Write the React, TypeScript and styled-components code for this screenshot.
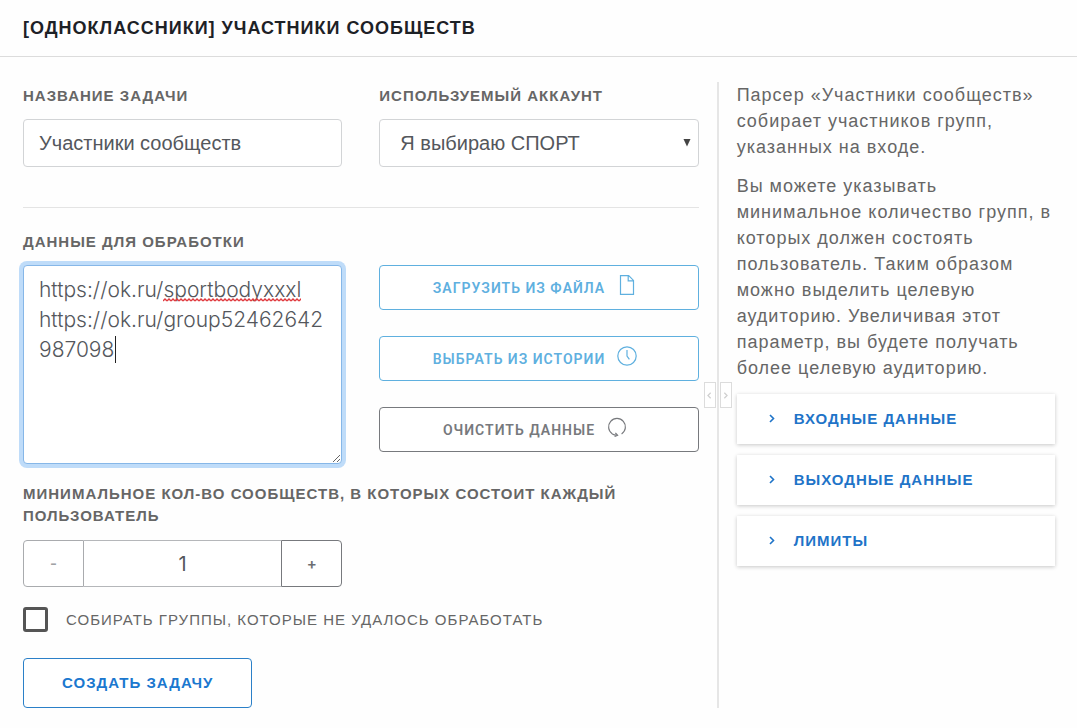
import React, { useState } from "react";
import styled, { createGlobalStyle, css } from "styled-components";

const GlobalStyle = createGlobalStyle`
  *, *::before, *::after { box-sizing: border-box; }
  body {
    margin: 0;
    background: #fefefe;
    color: #666;
    font-family: "Liberation Sans", Arial, sans-serif;
  }
`;

const Header = styled.header`
  padding: 16px 23px;
  border-bottom: 1px solid #dcdcdc;
`;

const Title = styled.h1`
  margin: 0;
  color: #1d2126;
  font-size: 18px;
  line-height: 24px;
  letter-spacing: 1px;
  text-transform: uppercase;
`;

const Layout = styled.div`
  display: grid;
  grid-template-columns: minmax(0, 2fr) 2px minmax(0, 1fr);
  padding: 25px 0 20px;
`;

const Form = styled.form`
  padding: 3px 18px 0 23px;
`;

const Columns = styled.div`
  display: grid;
  grid-template-columns: repeat(2, minmax(0, 1fr));
  column-gap: 37px;
`;

const Label = styled.label`
  display: block;
  margin-bottom: 12px;
  font-size: 15px;
  font-weight: 700;
  line-height: 22px;
  letter-spacing: 1px;
  text-transform: uppercase;
`;

const field = css`
  width: 100%;
  border: 1px solid #d2d4d6;
  border-radius: 4px;
  background: #fff;
  color: #54575c;
  font: 20px "Liberation Sans", Arial, sans-serif;
`;

const TextInput = styled.input`
  ${field}
  display: block;
  height: 48px;
  padding: 0 15px;
`;

const SelectBox = styled.div`
  display: grid;
  align-items: center;

  > * { grid-area: 1 / 1; }
`;

const Select = styled.select`
  ${field}
  height: 48px;
  padding: 0 20px;
  appearance: none;
`;

const SelectArrow = styled.svg`
  justify-self: end;
  margin-right: 8px;
  pointer-events: none;
`;

const Divider = styled.hr`
  height: 1px;
  margin: 40px 0 23px;
  border: 0;
  background: #e4e4e4;
`;

const Editor = styled.div`
  position: relative;
`;

const TextArea = styled.textarea`
  ${field}
  display: block;
  height: 199px;
  padding: 9px 15px;
  border-color: #86b7e8;
  outline: 0;
  box-shadow: 0 0 0 4px #bfdcf9;
  font-family: Inter, sans-serif;
  font-size: 21px;
  font-weight: 300;
  line-height: 30px;
  word-break: break-all;
  resize: vertical;
`;

const SpellMark = styled.svg`
  position: absolute;
  top: 33px;
  left: 140px;
  pointer-events: none;
`;

const Caret = styled.span`
  position: absolute;
  top: 71px;
  left: 92px;
  width: 1px;
  height: 27px;
  background: #222;
  pointer-events: none;
`;

const Actions = styled.div`
  display: flex;
  flex-direction: column;
  gap: 26px;
  padding-top: 34px;
`;

const tones = { info: "#5fb0df", muted: "#77797d" };

const ActionButton = styled.button<{ $tone: keyof typeof tones }>`
  display: flex;
  align-items: center;
  justify-content: center;
  gap: 12px;
  height: 45px;
  padding: 0 12px 0 4px;
  border: 1px solid ${({ $tone }) => tones[$tone]};
  border-radius: 4px;
  background: #fff;
  color: ${({ $tone }) => tones[$tone]};
  font: 600 14px Roboto, sans-serif;
  letter-spacing: 1px;
  text-transform: uppercase;

  svg { margin-bottom: 6px; }
`;

const StepperLabel = styled(Label)`
  margin: 19px 0 13px;
`;

const Stepper = styled.div`
  display: flex;
  height: 47px;
`;

const StepButton = styled.button<{ $side: "left" | "right" }>`
  width: 61px;
  border: 1px solid ${({ $side }) => ($side === "left" ? "#a9abae" : "#77797d")};
  border-radius: ${({ $side }) => ($side === "left" ? "4px 0 0 4px" : "0 4px 4px 0")};
  background: #fff;
  color: ${({ $side }) => ($side === "left" ? "#a0a2a5" : "#6c6e72")};
  font: 600 15px Inter, sans-serif;
`;

const StepValue = styled.input`
  flex: 1;
  min-width: 0;
  border: solid #b5b7ba;
  border-width: 1px 0;
  background: #fff;
  color: #54575c;
  font: 20px Inter, sans-serif;
  text-align: center;
`;

const CheckRow = styled.label`
  display: flex;
  align-items: center;
  gap: 18px;
  margin-top: 20px;
  font-size: 15px;
  line-height: 25px;
  letter-spacing: 1px;
  text-transform: uppercase;
`;

const CheckBox = styled.input`
  flex: none;
  width: 25px;
  height: 25px;
  margin: 0;
  border: 3px solid #555;
  border-radius: 3px;
  background: #fff;
  appearance: none;

  &:checked { background: #555; }
`;

const SubmitButton = styled.button`
  height: 50px;
  margin-top: 26px;
  padding: 0 38px 2px;
  border: 1px solid #2b80c8;
  border-radius: 4px;
  background: #fff;
  color: #1b78cf;
  font: 700 15px "Liberation Sans", Arial, sans-serif;
  letter-spacing: 1px;
  text-transform: uppercase;
`;

const Splitter = styled.div`
  position: relative;
  background: #e6e6e6;
`;

const SplitButton = styled.button<{ $side: "left" | "right" }>`
  position: absolute;
  top: 50%;
  ${({ $side }) => ($side === "left" ? "right: 3px;" : "left: 3px;")}
  display: grid;
  place-items: center;
  width: 12px;
  height: 26px;
  padding: 0;
  border: 1px solid #dcdcdc;
  background: #fff;
  color: #d0d0d0;
  transform: translateY(-50%);
`;

const Aside = styled.aside`
  padding: 0 22px 0 18px;
`;

const Paragraph = styled.p`
  margin: 0 0 13px;
  font-size: 18px;
  line-height: 26px;
  letter-spacing: 1px;
`;

const Accordion = styled.div`
  display: flex;
  flex-direction: column;
  gap: 11px;
`;

const AccordionButton = styled.button`
  display: flex;
  align-items: center;
  gap: 18px;
  height: 50px;
  padding: 0 30px 2px;
  border: 0;
  background: #fff;
  box-shadow: 0 1px 4px rgba(0, 0, 0, 0.22);
  color: #1f74c8;
  font: 700 15px "Liberation Sans", Arial, sans-serif;
  letter-spacing: 1px;
  text-transform: uppercase;
`;

const Chevron = ({ left = false, size = 9 }: { left?: boolean; size?: number }) => (
  <svg width={size} height={size} viewBox="0 0 9 9" fill="none" stroke="currentColor" strokeWidth="1.6" aria-hidden>
    <path d={left ? "M6 1 2.5 4.5 6 8" : "M3 1 6.5 4.5 3 8"} />
  </svg>
);

const FileIcon = () => (
  <svg width="20" height="20" viewBox="0 0 20 20" fill="none" stroke="currentColor" strokeWidth="1.2" aria-hidden>
    <path d="M3.5 .6h8.2l4.8 4.8v14H3.5zM11.2.6v5.3h5.3" />
  </svg>
);

const ClockIcon = () => (
  <svg width="20" height="20" viewBox="0 0 20 20" fill="none" stroke="currentColor" strokeWidth="1.2" aria-hidden>
    <circle cx="10" cy="10" r="9.2" />
    <path d="M10 4v6l2.4 3.4" />
  </svg>
);

const ReloadIcon = () => (
  <svg width="20" height="20" viewBox="0 0 20 20" fill="none" stroke="currentColor" strokeWidth="1.2" aria-hidden>
    <path d="M14.6 16.9A8.4 8.4 0 1 0 5.4 16.9Q7.2 18 9.4 18.2" />
    <path d="M8.4 15.8 10.6 18.3 7.6 19.5" />
  </svg>
);

const sections = ["Входные данные", "Выходные данные", "Лимиты"];

export default function App() {
  const [name, setName] = useState("Участники сообществ");
  const [source, setSource] = useState("https://ok.ru/sportbodyxxxl\nhttps://ok.ru/group52462642987098");
  const [count, setCount] = useState(1);

  return (
    <>
      <GlobalStyle />
      <Header>
        <Title>[Одноклассники] Участники сообществ</Title>
      </Header>
      <Layout>
        <Form onSubmit={(e) => e.preventDefault()}>
          <Columns>
            <div>
              <Label htmlFor="name">Название задачи</Label>
              <TextInput id="name" value={name} onChange={(e) => setName(e.target.value)} />
            </div>
            <div>
              <Label htmlFor="account">Используемый аккаунт</Label>
              <SelectBox>
                <Select id="account">
                  <option>Я выбираю СПОРТ</option>
                </Select>
                <SelectArrow width="8" height="8" viewBox="0 0 8 8" aria-hidden>
                  <path d="M.5 0h7L4 7.5z" fill="#444" />
                </SelectArrow>
              </SelectBox>
            </div>
          </Columns>
          <Divider />
          <Columns>
            <div>
              <Label htmlFor="source">Данные для обработки</Label>
              <Editor>
                <TextArea id="source" spellCheck={false} value={source} onChange={(e) => setSource(e.target.value)} />
                <SpellMark width="138" height="4" aria-hidden>
                  <defs>
                    <pattern id="wave" width="4" height="4" patternUnits="userSpaceOnUse">
                      <path d="M0 3 2 1 4 3" fill="none" stroke="#e0393e" strokeWidth="1.4" />
                    </pattern>
                  </defs>
                  <rect width="138" height="4" fill="url(#wave)" />
                </SpellMark>
                <Caret />
              </Editor>
            </div>
            <Actions>
              <ActionButton type="button" $tone="info">Загрузить из файла<FileIcon /></ActionButton>
              <ActionButton type="button" $tone="info">Выбрать из истории<ClockIcon /></ActionButton>
              <ActionButton type="button" $tone="muted">Очистить данные<ReloadIcon /></ActionButton>
            </Actions>
          </Columns>
          <StepperLabel htmlFor="count">Минимальное кол-во сообществ, в которых состоит каждый пользователь</StepperLabel>
          <Columns>
            <Stepper>
              <StepButton type="button" $side="left" onClick={() => setCount(Math.max(1, count - 1))}>-</StepButton>
              <StepValue id="count" value={count} onChange={(e) => setCount(Number(e.target.value) || 1)} />
              <StepButton type="button" $side="right" onClick={() => setCount(count + 1)}>+</StepButton>
            </Stepper>
          </Columns>
          <CheckRow>
            <CheckBox type="checkbox" />
            Собирать группы, которые не удалось обработать
          </CheckRow>
          <SubmitButton type="submit">Создать задачу</SubmitButton>
        </Form>
        <Splitter>
          <SplitButton type="button" $side="left" aria-label="Свернуть форму"><Chevron left size={7} /></SplitButton>
          <SplitButton type="button" $side="right" aria-label="Свернуть справку"><Chevron size={7} /></SplitButton>
        </Splitter>
        <Aside>
          <Paragraph>Парсер «Участники сообществ» собирает участников групп, указанных на входе.</Paragraph>
          <Paragraph>
            Вы можете указывать минимальное количество групп, в которых должен состоять пользователь. Таким образом
            можно выделить целевую аудиторию. Увеличивая этот параметр, вы будете получать более целевую аудиторию.
          </Paragraph>
          <Accordion>
            {sections.map((title) => (
              <AccordionButton key={title} type="button" aria-expanded={false}><Chevron />{title}</AccordionButton>
            ))}
          </Accordion>
        </Aside>
      </Layout>
    </>
  );
}
